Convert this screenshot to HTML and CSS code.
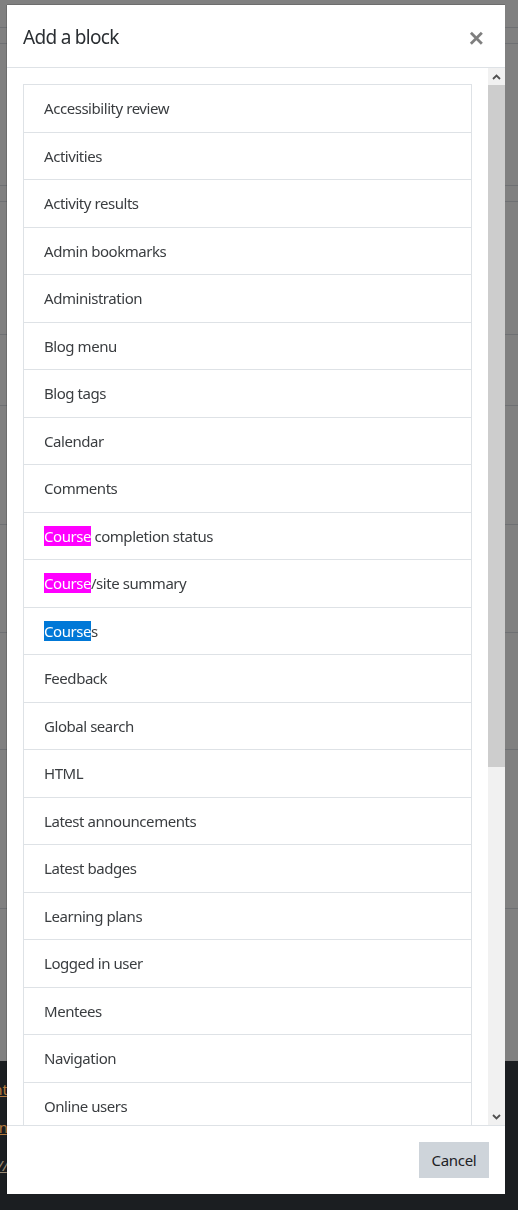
FILE: index.html
```html
<!DOCTYPE html>
<html lang="en">
<head>
<meta charset="utf-8">
<title>Add a block</title>
<link rel="stylesheet" href="styles.css">
</head>
<body>
<div class="page">
  <div class="band h27"></div>
  <div class="band h15"></div>
  <div class="band h141"></div>
  <div class="band h15"></div>
  <div class="band h132"></div>
  <div class="band h70"></div>
  <div class="band h118"></div>
  <div class="band h107"></div>
  <div class="band h116"></div>
  <div class="band h158"></div>
  <div class="spacer"></div>
  <footer class="site-footer">
    <div class="footer-links">
      <a href="#">Accessibility statement</a>
      <a href="#">Data retention summary In</a>
      <a href="#" class="url">https://</a>
    </div>
  </footer>
</div>

<div class="modal" role="dialog">
  <div class="modal-header">
    <h5 class="modal-title">Add a block</h5>
    <button class="close" type="button" aria-label="Close">×</button>
  </div>
  <div class="modal-body">
    <div class="body-content">
      <div class="list-group">
        <a class="item" href="#">Accessibility review</a>
        <a class="item" href="#">Activities</a>
        <a class="item" href="#">Activity results</a>
        <a class="item" href="#">Admin bookmarks</a>
        <a class="item" href="#">Administration</a>
        <a class="item" href="#">Blog menu</a>
        <a class="item" href="#">Blog tags</a>
        <a class="item" href="#">Calendar</a>
        <a class="item" href="#">Comments</a>
        <a class="item" href="#"><span class="hl">Course</span> completion status</a>
        <a class="item" href="#"><span class="hl">Course</span>/site summary</a>
        <a class="item" href="#"><span class="sel">Course</span>s</a>
        <a class="item" href="#">Feedback</a>
        <a class="item" href="#">Global search</a>
        <a class="item" href="#">HTML</a>
        <a class="item" href="#">Latest announcements</a>
        <a class="item" href="#">Latest badges</a>
        <a class="item" href="#">Learning plans</a>
        <a class="item" href="#">Logged in user</a>
        <a class="item" href="#">Mentees</a>
        <a class="item" href="#">Navigation</a>
        <a class="item" href="#">Online users</a>
        <a class="item" href="#">Private files</a>
        <a class="item" href="#">Random glossary entry</a>
      </div>
    </div>
    <div class="scrollbar">
      <div class="sb-btn">
        <svg width="9" height="6" viewBox="0 0 9 6"><path d="M1 5 L4.5 1.5 L8 5" fill="none" stroke="#505050" stroke-width="1.8"/></svg>
      </div>
      <div class="sb-track">
        <div class="sb-thumb"></div>
      </div>
      <div class="sb-btn">
        <svg width="9" height="6" viewBox="0 0 9 6"><path d="M1 1 L4.5 4.5 L8 1" fill="none" stroke="#505050" stroke-width="1.8"/></svg>
      </div>
    </div>
  </div>
  <div class="modal-footer">
    <button class="btn" type="button">Cancel</button>
  </div>
</div>
</body>
</html>
```

FILE: styles.css
```css
html, body {
  margin: 0;
  padding: 0;
}
body {
  background: #808080;
  font-family: "Noto Sans", "Open Sans", sans-serif;
  color: #373a3c;
  height: 1210px;
  overflow: hidden;
}
.page {
  display: flex;
  flex-direction: column;
}
.band {
  border-bottom: 1px solid #6e7073;
}
.h27 { height: 27px; }
.h15 { height: 15px; }
.h141 { height: 141px; }
.h132 { height: 132px; }
.h70 { height: 70px; }
.h118 { height: 118px; }
.h107 { height: 107px; }
.h116 { height: 116px; }
.h158 { height: 158px; }
.spacer { height: 152px; }
.site-footer {
  background: #1b1e21;
  height: 150px;
}
.footer-links {
  display: flex;
  flex-direction: column;
  align-items: flex-end;
  width: 8px;
  padding-top: 17px;
  gap: 16px;
  font-size: 15px;
  line-height: 22px;
}
.footer-links a {
  color: #b47a3e;
  text-decoration: underline;
  white-space: nowrap;
}
.footer-links a.url {
  font-style: italic;
  color: #9a8a74;
}
.modal {
  position: fixed;
  left: 7px;
  top: 5px;
  width: 498px;
  height: 1189px;
  background: #fff;
  display: flex;
  flex-direction: column;
  box-shadow: -1px 0 0 rgba(0,0,0,0.15), 0 -1px 0 rgba(0,0,0,0.15);
}
.modal-header {
  display: flex;
  align-items: center;
  justify-content: space-between;
  padding: 17px 16px 15px 16px;
  border-bottom: 1px solid #dee2e6;
  flex: none;
}
.modal-title {
  margin: 0;
  font-size: 19px;
  font-weight: 400;
  line-height: 30px;
  letter-spacing: -0.7px;
  color: #2a2e32;
}
.close {
  border: 0;
  background: transparent;
  padding: 0 5px 0 0;
  font-family: "Liberation Sans", Arial, sans-serif;
  font-size: 26px;
  font-weight: 700;
  line-height: 26px;
  color: #000;
  opacity: 0.5;
  margin-top: 1px;
}
.modal-body {
  flex: 1;
  display: flex;
  min-height: 0;
}
.body-content {
  flex: 1;
  overflow: hidden;
  padding: 16px 16px 0 16px;
}
.list-group {
  display: flex;
  flex-direction: column;
  border: 1px solid #dee2e6;
  border-bottom: 0;
}
.item {
  display: block;
  padding: 12px 20px;
  font-size: 15px;
  line-height: 22.5px;
  letter-spacing: -0.45px;
  color: #3a3d40;
  text-decoration: none;
  border-bottom: 1px solid #dee2e6;
}
.hl {
  background: #ff00ff;
  color: #fff;
}
.sel {
  background: #0078d7;
  color: #fff;
}
.scrollbar {
  width: 17px;
  flex: none;
  background: #f1f1f1;
  display: flex;
  flex-direction: column;
}
.sb-btn {
  height: 17px;
  display: flex;
  align-items: center;
  justify-content: center;
  flex: none;
}
.sb-track {
  flex: 1;
  display: flex;
  flex-direction: column;
}
.sb-thumb {
  height: 682px;
  background: #cdcdcd;
}
.modal-footer {
  flex: none;
  display: flex;
  justify-content: flex-end;
  padding: 16px;
  border-top: 1px solid #dee2e6;
}
.btn {
  border: 0;
  background: #ced4da;
  color: #1d2125;
  font-family: "Noto Sans", "Open Sans", sans-serif;
  font-size: 15px;
  line-height: 22px;
  letter-spacing: -0.3px;
  padding: 7px 12px;
  height: 36px;
  width: 70px;
}
```
